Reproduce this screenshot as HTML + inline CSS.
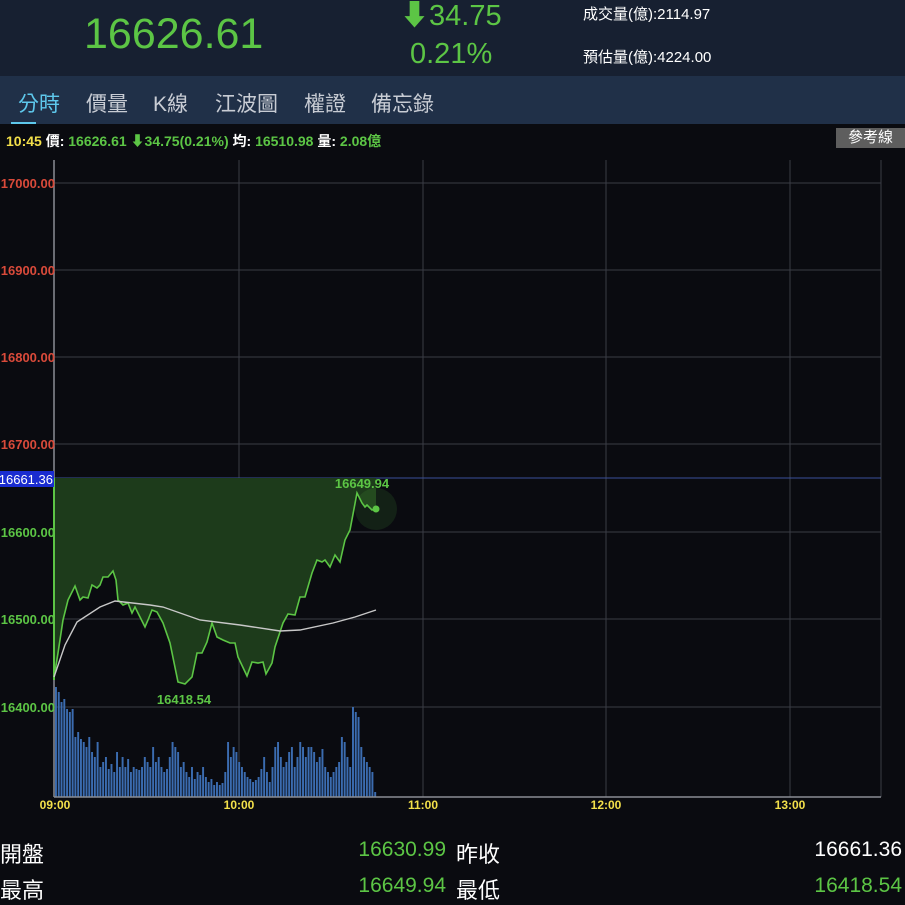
<!DOCTYPE html>
<html><head><meta charset="utf-8"><style>
*{margin:0;padding:0;box-sizing:border-box}
body{width:905px;height:900px;overflow:hidden;background:#0a0b10;font-family:"Liberation Sans","Noto Sans CJK TC",sans-serif;position:relative;color:#fff}
.hdr{position:absolute;left:0;top:0;width:905px;height:76px;background:#172031}
.tabs{position:absolute;left:0;top:76px;width:905px;height:48px;background:#203048}
.t{position:absolute;top:88px;font-size:21px;color:#c8ccd4}
.abs{position:absolute;white-space:nowrap}
.g{color:#5cc545}
</style></head><body>
<div class="hdr"></div>
<div class="abs g" style="left:84px;top:10px;font-size:43px">16626.61</div>
<div class="abs g" style="left:400px;top:-8px;font-size:29px">&#x2B07;34.75</div>
<div class="abs g" style="left:410px;top:38px;font-size:29px">0.21%</div>
<div class="abs" style="left:583px;top:3px;font-size:15px">成交量(億):2114.97</div>
<div class="abs" style="left:583px;top:46px;font-size:15px">預估量(億):4224.00</div>
<div class="tabs"></div>
<div class="t" style="left:18px;color:#5ec8ec">分時</div>
<div class="abs" style="left:11px;top:122px;width:25px;height:2px;background:#5ec8ec"></div>
<div class="t" style="left:86px">價量</div>
<div class="t" style="left:153px">K線</div>
<div class="t" style="left:215px">江波圖</div>
<div class="t" style="left:304px">權證</div>
<div class="t" style="left:371px">備忘錄</div>
<div class="abs" style="left:6px;top:131px;font-size:14px;font-weight:bold"><span style="color:#f3e04a">10:45</span> 價: <span class="g">16626.61 &#x2B07;34.75(0.21%)</span> 均: <span class="g">16510.98</span> 量: <span class="g">2.08億</span></div>
<div class="abs" style="left:836px;top:128px;width:69px;height:20px;background:#5e5e5e;font-size:15px;text-align:center;line-height:20px">參考線</div>
<svg class="abs" style="left:0;top:150px" width="905" height="670" viewBox="0 150 905 670">
<g stroke="#3a3d45" stroke-width="1">
<line x1="54" y1="183" x2="881" y2="183"/><line x1="54" y1="270" x2="881" y2="270"/><line x1="54" y1="357" x2="881" y2="357"/><line x1="54" y1="444" x2="881" y2="444"/><line x1="54" y1="532" x2="881" y2="532"/><line x1="54" y1="619" x2="881" y2="619"/><line x1="54" y1="707" x2="881" y2="707"/>
<line x1="239" y1="160" x2="239" y2="797"/><line x1="423" y1="160" x2="423" y2="797"/><line x1="606" y1="160" x2="606" y2="797"/><line x1="790" y1="160" x2="790" y2="797"/><line x1="881" y1="160" x2="881" y2="797"/>
</g>
<line x1="54" y1="478" x2="881" y2="478" stroke="#3a4f9a"/>
<polygon fill="#1d3b1b" points="54,478 54,678 58,653 63,620 68,600 75,586 80,600 83,597 88,598 92,585 97,588 100,585 103,577 108,577 113,571 116,580 118,600 123,605 128,603 132,613 135,607 140,617 145,627 148,620 152,610 157,612 163,623 170,643 178,682 185,684 192,677 197,653 202,653 207,642 212,623 217,637 223,640 230,643 235,643 238,657 247,676 252,662 258,663 263,662 266,674 272,663 275,647 283,623 288,614 295,615 300,597 305,597 312,573 317,560 322,562 325,560 330,567 335,555 340,562 345,540 350,530 357,493 362,503 365,507 367,505 372,510 376,509 376,478"/>
<g id="bars" fill="#3b6cb0"></g>
<line x1="54" y1="160" x2="54" y2="797" stroke="#8a8d94" stroke-width="1.5"/>
<line x1="54" y1="797" x2="881" y2="797" stroke="#8a8d94" stroke-width="1.5"/>
<line x1="54" y1="478" x2="54" y2="680" stroke="#5cc545" stroke-width="2"/>
<polyline fill="none" stroke="#5cc545" stroke-width="1.6" points="54,678 58,653 63,620 68,600 75,586 80,600 83,597 88,598 92,585 97,588 100,585 103,577 108,577 113,571 116,580 118,600 123,605 128,603 132,613 135,607 140,617 145,627 148,620 152,610 157,612 163,623 170,643 178,682 185,684 192,677 197,653 202,653 207,642 212,623 217,637 223,640 230,643 235,643 238,657 247,676 252,662 258,663 263,662 266,674 272,663 275,647 283,623 288,614 295,615 300,597 305,597 312,573 317,560 322,562 325,560 330,567 335,555 340,562 345,540 350,530 357,493 362,503 365,507 367,505 372,510 376,509"/>
<polyline fill="none" stroke="#c8c8c8" stroke-width="1.4" points="54,677 65,645 77,622 100,607 115,601 150,605 163,607 200,620 240,625 280,631 300,630 333,623 355,617 376,610"/>
<circle cx="376" cy="509" r="21" fill="#5cc545" opacity="0.12"/>
<circle cx="376" cy="509" r="3.5" fill="#5cc545"/>
<g font-family="Liberation Sans,sans-serif" font-weight="bold" font-size="13">
<g fill="#d94a3a" text-anchor="end"><text x="55" y="188">17000.00</text><text x="55" y="275">16900.00</text><text x="55" y="362">16800.00</text><text x="55" y="449">16700.00</text></g>
<g fill="#5cc545" text-anchor="end"><text x="55" y="537">16600.00</text><text x="55" y="624">16500.00</text><text x="55" y="712">16400.00</text></g>
<rect x="0" y="471" width="54" height="16" fill="#1a2cd0"/>
<text x="53" y="484" fill="#fff" text-anchor="end" font-weight="normal" font-size="13">16661.36</text>
<text x="362" y="488" fill="#5cc545" text-anchor="middle">16649.94</text>
<text x="184" y="704" fill="#5cc545" text-anchor="middle">16418.54</text>
<g fill="#f3e04a" text-anchor="middle" font-size="12"><text x="55" y="809">09:00</text><text x="239" y="809">10:00</text><text x="423" y="809">11:00</text><text x="606" y="809">12:00</text><text x="790" y="809">13:00</text></g>
</g>
</svg>
<div class="abs" style="left:0;top:837px;font-size:22px">開盤</div>
<div class="abs g" style="right:459px;top:838px;font-size:21px">16630.99</div>
<div class="abs" style="left:456px;top:837px;font-size:22px">昨收</div>
<div class="abs" style="right:3px;top:838px;font-size:21px">16661.36</div>
<div class="abs" style="left:0;top:873px;font-size:22px">最高</div>
<div class="abs g" style="right:459px;top:874px;font-size:21px">16649.94</div>
<div class="abs" style="left:456px;top:873px;font-size:22px">最低</div>
<div class="abs g" style="right:3px;top:874px;font-size:21px">16418.54</div>
<script>
var h=[110,105,95,98,88,85,88,60,65,58,55,50,60,45,40,55,30,35,40,28,33,25,45,30,40,30,38,25,30,28,27,30,40,35,30,50,35,40,30,25,28,40,55,50,45,30,35,25,20,30,18,25,22,30,20,15,18,12,15,12,14,25,55,40,50,45,35,30,25,20,18,15,17,20,28,40,25,15,30,50,55,40,30,35,45,50,30,40,55,50,40,50,50,45,35,40,48,30,25,20,25,30,35,60,55,40,30,90,85,80,50,40,35,30,25,5];
var s='',w=322/h.length;for(var i=0;i<h.length;i++){s+='<rect x="'+(55+i*w).toFixed(2)+'" y="'+(797-h[i])+'" width="'+(w*0.7).toFixed(2)+'" height="'+h[i]+'"/>';}
document.getElementById('bars').innerHTML=s;
</script>
</body></html>
